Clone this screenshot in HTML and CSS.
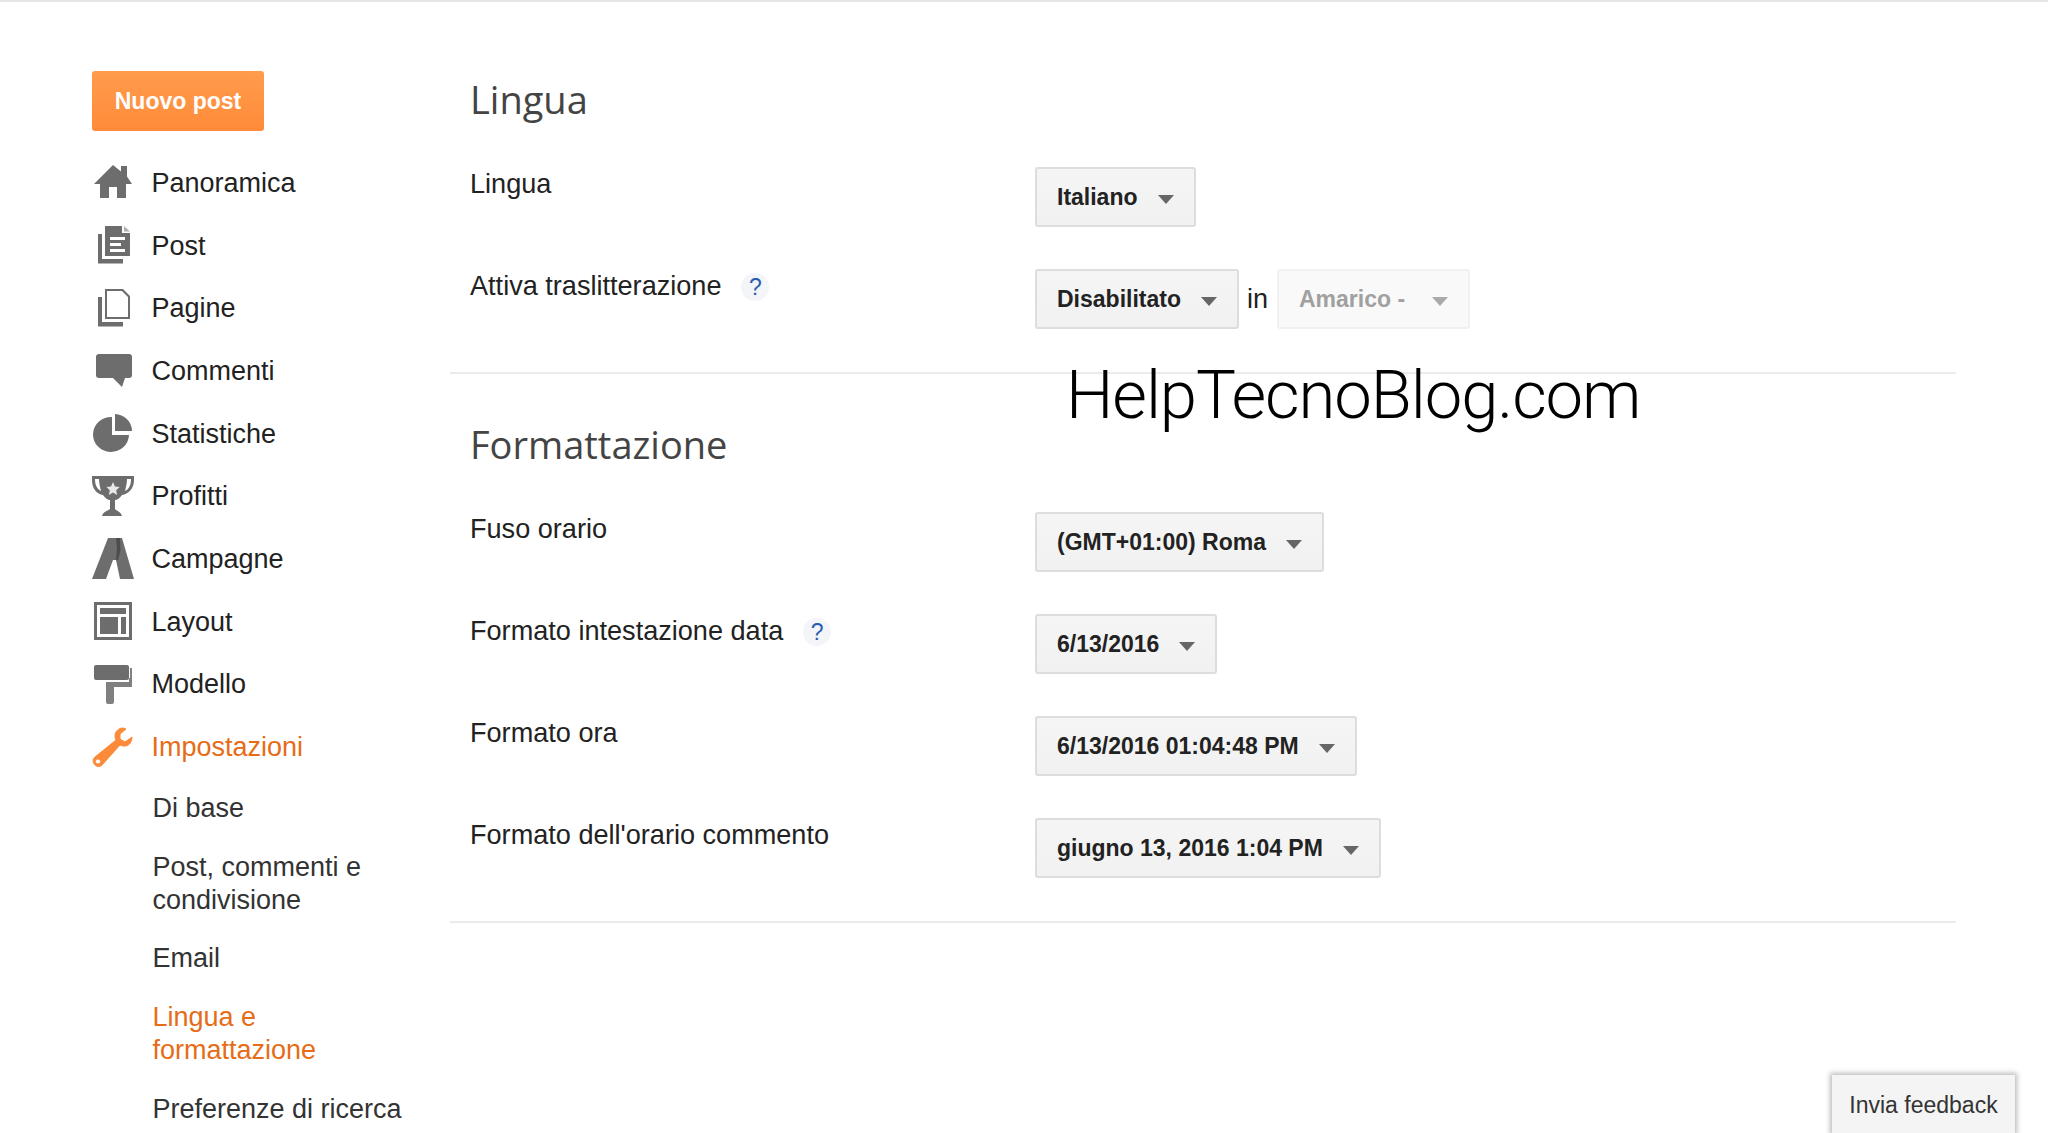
FILE: index.html
```html
<!DOCTYPE html>
<html lang="it">
<head>
<meta charset="utf-8">
<title>Lingua e formattazione</title>
<link rel="stylesheet" href="styles.css">
</head>
<body>
<div class="page">
  <aside class="sidebar">
    <button class="new-post">Nuovo post</button>
    <ul class="nav">
      <li class="nav-item"><svg class="icon" viewBox="0 0 42 42"><path d="M21 3 L29 9.5 V4 H35 V14.5 L40 22 H34 V36 H25 V25 H17 V36 H8 V22 H2 Z"/></svg>Panoramica</li>
      <li class="nav-item"><svg class="icon" viewBox="0 0 42 42"><path d="M6 9 H10 V34 H31 V38.5 H6 Z"/><path fill-rule="evenodd" d="M13 1 H30 V8 H38 V31 H13 Z M18 12 V15 H33 V12 Z M18 18 V21 H29 V18 Z M18 24 V27 H33 V24 Z"/><path d="M32 1 L38 6.5 H32 Z" opacity=".55"/></svg>Post</li>
      <li class="nav-item"><svg class="icon" viewBox="0 0 42 42"><path d="M6 9 H10 V34 H31 V38.5 H6 Z"/><path fill-rule="evenodd" d="M13 1 H31 L38 8 V31 H13 Z M15 3 V29 H36 V9 L30 3 Z"/></svg>Pagine</li>
      <li class="nav-item"><svg class="icon" viewBox="0 0 42 42"><path d="M7 4 H37 Q40 4 40 7 V25 Q40 28 37 28 H33 L30 37 L21 28 H7 Q4 28 4 25 V7 Q4 4 7 4 Z"/></svg>Commenti</li>
      <li class="nav-item"><svg class="icon" viewBox="0 0 42 42"><path d="M20 4 V22 H37 A18 17.5 0 1 1 20 4 Z"/><path d="M23 1 A17.5 17.5 0 0 1 40 18 H23 Z"/></svg>Statistiche</li>
      <li class="nav-item"><svg class="icon" viewBox="0 0 42 42"><path fill-rule="evenodd" d="M0 0 H42 V4 C42 13 36 18 30 19 C28 22 25 24 23 24 V33 C25 35 29 36 30 40 H10 C11 36 15 35 18 33 V24 C16 24 13 22 11 19 C5 18 0 13 0 4 Z M3 3 C3 9 5 13 9 15 C8 11 7 7 7 3 Z M39 3 H35 C35 7 34 11 33 15 C37 13 39 9 39 3 Z"/><path class="star" d="M21 6 L23 10.5 L27.6 11 L24.2 14.2 L25.1 19 L21 16.6 L16.9 19 L17.8 14.2 L14.4 11 L19 10.5 Z"/></svg>Profitti</li>
      <li class="nav-item"><svg class="icon" viewBox="0 0 42 42"><path d="M16 0 H30 L42 41 H28 L24 22 H21 L14 41 H0 Z"/><path class="fold" d="M24 0 H28 L28.5 12 L26 22 H24 L25 10 Z"/></svg>Campagne</li>
      <li class="nav-item"><svg class="icon" viewBox="0 0 42 42"><path fill-rule="evenodd" d="M2 1 H40 V39 H2 Z M5 4 V36 H37 V4 Z"/><path d="M8 7 H34 V13 H8 Z M8 16 H26 V33 H8 Z M29 16 H34 V33 H29 Z"/></svg>Layout</li>
      <li class="nav-item"><svg class="icon" viewBox="0 0 42 42"><path d="M4 1 H35 Q37 1 37 3 V14 Q37 16 35 16 H4 Q2 16 2 14 V3 Q2 1 4 1 Z"/><path class="handle" d="M38 4 H40 V23 H22 V38 Q22 40 20 40 H16 Q14 40 14 38 V18 H37 V14 H38 Z"/></svg>Modello</li>
      <li class="nav-item is-active"><svg class="icon icon-active" viewBox="0 0 42 42"><path fill-rule="evenodd" d="M31 1 C27 1 23 4 23 9 C23 11 23.5 12 24 13 L3 30 C0 33 1 36 3 38 C5 40 8 40 10 38 L28 18 C30 19 31 19 33 19 C37 19 40 15 40 10 L33 15 L28 12 L28 7 L34 2 Z M6 32 A2.5 2.5 0 1 0 6.1 32 Z"/></svg>Impostazioni</li>
    </ul>
    <ul class="subnav">
      <li>Di base</li>
      <li>Post, commenti e condivisione</li>
      <li>Email</li>
      <li class="is-active">Lingua e formattazione</li>
      <li>Preferenze di ricerca</li>
    </ul>
  </aside>

  <main class="content">
    <section class="section">
      <h2 class="section-title">Lingua</h2>
      <div class="row">
        <div class="label">Lingua</div>
        <div class="controls"><div class="select">Italiano<span class="arrow"></span></div></div>
      </div>
      <div class="row">
        <div class="label">Attiva traslitterazione<span class="help">?</span></div>
        <div class="controls">
          <div class="select">Disabilitato<span class="arrow"></span></div>
          <span class="in">in</span>
          <div class="select select-disabled">Amarico -<span class="arrow"></span></div>
        </div>
      </div>
    </section>
    <section class="section section-format">
      <h2 class="section-title">Formattazione</h2>
      <div class="row">
        <div class="label">Fuso orario</div>
        <div class="controls"><div class="select">(GMT+01:00) Roma<span class="arrow"></span></div></div>
      </div>
      <div class="row">
        <div class="label">Formato intestazione data<span class="help">?</span></div>
        <div class="controls"><div class="select">6/13/2016<span class="arrow"></span></div></div>
      </div>
      <div class="row">
        <div class="label">Formato ora</div>
        <div class="controls"><div class="select">6/13/2016 01:04:48 PM<span class="arrow"></span></div></div>
      </div>
      <div class="row">
        <div class="label">Formato dell'orario commento</div>
        <div class="controls"><div class="select">giugno 13, 2016 1:04 PM<span class="arrow"></span></div></div>
      </div>
    </section>
  </main>
</div>
<div class="watermark">HelpTecnoBlog.com</div>
<div class="feedback">Invia feedback</div>
</body>
</html>
```
FILE: styles.css
```css
* { box-sizing: border-box; }
html, body { height: 100%; }
body {
  margin: 0;
  overflow: hidden;
  background: #fff;
  color: #222;
  font-family: "Liberation Sans", Arial, sans-serif;
  border-top: 2px solid #e6e6e6;
}
ul { list-style: none; margin: 0; padding: 0; }

.page { display: flex; padding-left: 92px; }

.sidebar { width: 358px; flex: none; padding-top: 69px; }

.new-post {
  display: block;
  width: 172px;
  height: 60px;
  padding: 0;
  border: 0;
  border-radius: 3px;
  background: linear-gradient(#ff9c4c, #ff8b3a);
  color: #fff;
  font: bold 23px "Liberation Sans", Arial, sans-serif;
}

.nav { margin-top: 21px; }
.nav-item {
  display: flex;
  align-items: center;
  gap: 17.5px;
  height: 62.7px;
  font-size: 27px;
  color: #222;
}
.icon { width: 42px; height: 42px; flex: none; fill: #6d6d6d; }
.icon .star { fill: #fff; opacity: .85; }
.icon .fold { fill: #4c4c4c; }
.icon .handle { fill: #808080; }
.icon-active { fill: #fb8a39; stroke: #fb8a39; stroke-width: 1; }
.nav-item.is-active { color: #e66c17; }

.subnav { margin-top: 13px; padding-left: 60.5px; font-size: 27px; line-height: 33px; color: #333; }
.subnav li { margin-bottom: 25.7px; width: 260px; }
.subnav li:last-child { width: 290px; }
.subnav .is-active { color: #e66c17; }

.content { width: 1506px; flex: none; padding-top: 74px; }
.section { padding-left: 20px; border-bottom: 2px solid #ebebeb; }
.section-format { margin-top: 47px; }
.section-title {
  margin: 0 0 46px;
  font: 400 38px/46px "Open Sans", sans-serif;
  color: #444;
}
.row { display: flex; margin-bottom: 43px; }
.label {
  width: 565px;
  flex: none;
  font-size: 27.1px;
  line-height: 32px;
  color: #222;
}
.help {
  display: inline-block;
  width: 28px;
  height: 28px;
  margin-left: 20px;
  border-radius: 50%;
  background: #f3f5f9;
  color: #2a5db0;
  font-size: 23px;
  line-height: 28px;
  text-align: center;
}
.controls { display: flex; align-items: center; margin-top: -1px; }
.select {
  display: flex;
  align-items: center;
  height: 60px;
  padding: 0 20px;
  border: 2px solid #dddddd;
  border-radius: 3px;
  background: linear-gradient(#f5f5f5, #f1f1f1);
  color: #222;
  font-size: 23px;
  font-weight: bold;
}
.arrow {
  width: 0;
  height: 0;
  margin-left: 20px;
  margin-top: 4px;
  border: 8px solid transparent;
  border-top: 9px solid #666;
  border-bottom: 0;
}
.select-disabled {
  background: #f9f9f9;
  border-color: #f1f1f1;
  color: #a0a0a0;
}
.select-disabled .arrow { margin-left: 26.5px; border-top-color: #aaa; }
.in { margin: 0 9px 0 8px; font-size: 27px; color: #222; }

.watermark {
  position: absolute;
  left: 1066px;
  top: 353px;
  font-family: Roboto, sans-serif;
  font-weight: 300;
  font-size: 67px;
  letter-spacing: -1.1px;
  line-height: 85px;
  color: #000;
  white-space: nowrap;
}
.feedback {
  position: absolute;
  left: 1832px;
  top: 1075px;
  width: 183px;
  height: 58px;
  padding-top: 1px;
  background: #f4f4f4;
  box-shadow: 0 0 5px 2px #bbb;
  color: #333;
  font-size: 23px;
  line-height: 58px;
  text-align: center;
}
```
